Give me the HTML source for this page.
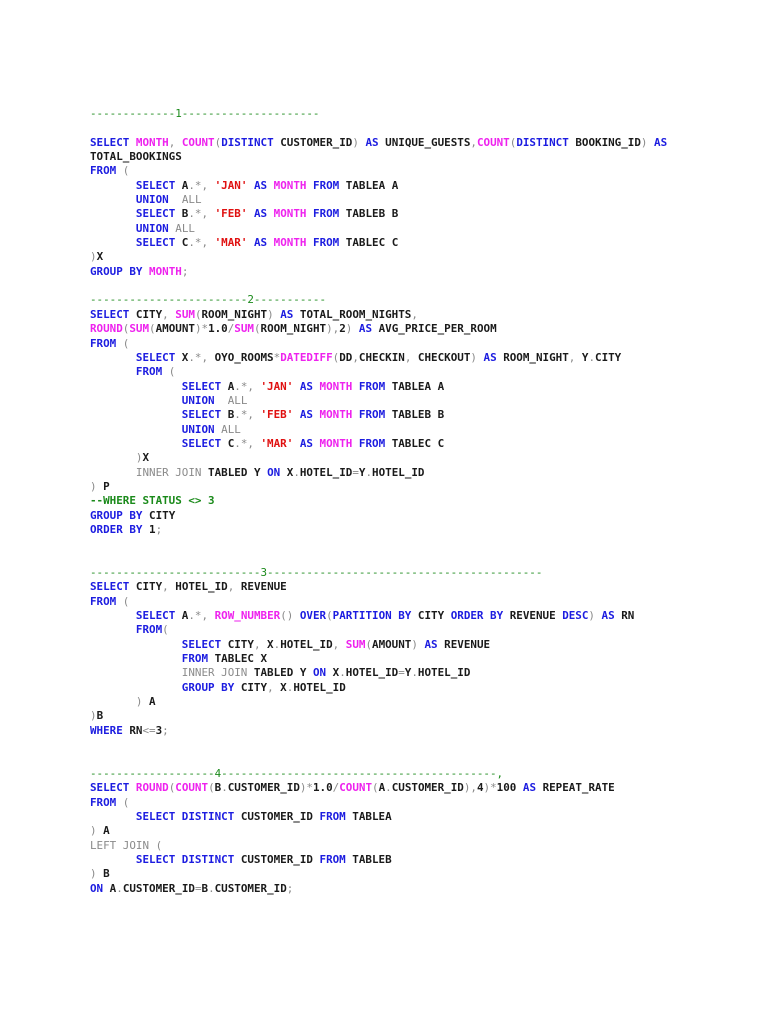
<!DOCTYPE html>
<html><head><meta charset="utf-8"><style>
html,body{margin:0;padding:0;background:#fff;width:768px;height:1024px;overflow:hidden}
pre{position:absolute;left:90px;top:107px;margin:0;font-family:"DejaVu Sans Mono","Liberation Mono",monospace;font-size:10.9px;line-height:14.35px;font-weight:bold;color:#1a1a1a;letter-spacing:0}
.k{color:#1c1ce0}.f{color:#ee22ee}.s{color:#e01010}.g{color:#8a8a8a;font-weight:normal}.c{color:#1a8a1a;font-weight:normal}.cb{color:#1a8a1a}
</style></head><body><pre><span class="c">-------------1---------------------</span>

<span class="k">SELECT</span> <span class="f">MONTH</span><span class="g">,</span> <span class="f">COUNT</span><span class="g">(</span><span class="k">DISTINCT</span> CUSTOMER_ID<span class="g">)</span> <span class="k">AS</span> UNIQUE_GUESTS<span class="g">,</span><span class="f">COUNT</span><span class="g">(</span><span class="k">DISTINCT</span> BOOKING_ID<span class="g">)</span> <span class="k">AS</span>
TOTAL_BOOKINGS
<span class="k">FROM</span> <span class="g">(</span>
       <span class="k">SELECT</span> A<span class="g">.*,</span> <span class="s">'JAN'</span> <span class="k">AS</span> <span class="f">MONTH</span> <span class="k">FROM</span> TABLEA A
       <span class="k">UNION</span>  <span class="g">ALL</span>
       <span class="k">SELECT</span> B<span class="g">.*,</span> <span class="s">'FEB'</span> <span class="k">AS</span> <span class="f">MONTH</span> <span class="k">FROM</span> TABLEB B
       <span class="k">UNION</span> <span class="g">ALL</span>
       <span class="k">SELECT</span> C<span class="g">.*,</span> <span class="s">'MAR'</span> <span class="k">AS</span> <span class="f">MONTH</span> <span class="k">FROM</span> TABLEC C
<span class="g">)</span>X
<span class="k">GROUP BY</span> <span class="f">MONTH</span><span class="g">;</span>

<span class="c">------------------------2-----------</span>
<span class="k">SELECT</span> CITY<span class="g">,</span> <span class="f">SUM</span><span class="g">(</span>ROOM_NIGHT<span class="g">)</span> <span class="k">AS</span> TOTAL_ROOM_NIGHTS<span class="g">,</span>
<span class="f">ROUND</span><span class="g">(</span><span class="f">SUM</span><span class="g">(</span>AMOUNT<span class="g">)*</span>1.0<span class="g">/</span><span class="f">SUM</span><span class="g">(</span>ROOM_NIGHT<span class="g">),</span>2<span class="g">)</span> <span class="k">AS</span> AVG_PRICE_PER_ROOM
<span class="k">FROM</span> <span class="g">(</span>
       <span class="k">SELECT</span> X<span class="g">.*,</span> OYO_ROOMS<span class="g">*</span><span class="f">DATEDIFF</span><span class="g">(</span>DD<span class="g">,</span>CHECKIN<span class="g">,</span> CHECKOUT<span class="g">)</span> <span class="k">AS</span> ROOM_NIGHT<span class="g">,</span> Y<span class="g">.</span>CITY
       <span class="k">FROM</span> <span class="g">(</span>
              <span class="k">SELECT</span> A<span class="g">.*,</span> <span class="s">'JAN'</span> <span class="k">AS</span> <span class="f">MONTH</span> <span class="k">FROM</span> TABLEA A
              <span class="k">UNION</span>  <span class="g">ALL</span>
              <span class="k">SELECT</span> B<span class="g">.*,</span> <span class="s">'FEB'</span> <span class="k">AS</span> <span class="f">MONTH</span> <span class="k">FROM</span> TABLEB B
              <span class="k">UNION</span> <span class="g">ALL</span>
              <span class="k">SELECT</span> C<span class="g">.*,</span> <span class="s">'MAR'</span> <span class="k">AS</span> <span class="f">MONTH</span> <span class="k">FROM</span> TABLEC C
       <span class="g">)</span>X
       <span class="g">INNER JOIN</span> TABLED Y <span class="k">ON</span> X<span class="g">.</span>HOTEL_ID<span class="g">=</span>Y<span class="g">.</span>HOTEL_ID
<span class="g">)</span> P
<span class="cb">--WHERE STATUS &lt;&gt; 3</span>
<span class="k">GROUP BY</span> CITY
<span class="k">ORDER BY</span> 1<span class="g">;</span>


<span class="c">--------------------------3------------------------------------------</span>
<span class="k">SELECT</span> CITY<span class="g">,</span> HOTEL_ID<span class="g">,</span> REVENUE
<span class="k">FROM</span> <span class="g">(</span>
       <span class="k">SELECT</span> A<span class="g">.*,</span> <span class="f">ROW_NUMBER</span><span class="g">()</span> <span class="k">OVER</span><span class="g">(</span><span class="k">PARTITION BY</span> CITY <span class="k">ORDER BY</span> REVENUE <span class="k">DESC</span><span class="g">)</span> <span class="k">AS</span> RN
       <span class="k">FROM</span><span class="g">(</span>
              <span class="k">SELECT</span> CITY<span class="g">,</span> X<span class="g">.</span>HOTEL_ID<span class="g">,</span> <span class="f">SUM</span><span class="g">(</span>AMOUNT<span class="g">)</span> <span class="k">AS</span> REVENUE
              <span class="k">FROM</span> TABLEC X
              <span class="g">INNER JOIN</span> TABLED Y <span class="k">ON</span> X<span class="g">.</span>HOTEL_ID<span class="g">=</span>Y<span class="g">.</span>HOTEL_ID
              <span class="k">GROUP BY</span> CITY<span class="g">,</span> X<span class="g">.</span>HOTEL_ID
       <span class="g">)</span> A
<span class="g">)</span>B
<span class="k">WHERE</span> RN<span class="g">&lt;=</span>3<span class="g">;</span>


<span class="c">-------------------4------------------------------------------,</span>
<span class="k">SELECT</span> <span class="f">ROUND</span><span class="g">(</span><span class="f">COUNT</span><span class="g">(</span>B<span class="g">.</span>CUSTOMER_ID<span class="g">)*</span>1.0<span class="g">/</span><span class="f">COUNT</span><span class="g">(</span>A<span class="g">.</span>CUSTOMER_ID<span class="g">),</span>4<span class="g">)*</span>100 <span class="k">AS</span> REPEAT_RATE
<span class="k">FROM</span> <span class="g">(</span>
       <span class="k">SELECT DISTINCT</span> CUSTOMER_ID <span class="k">FROM</span> TABLEA
<span class="g">)</span> A
<span class="g">LEFT JOIN (</span>
       <span class="k">SELECT DISTINCT</span> CUSTOMER_ID <span class="k">FROM</span> TABLEB
<span class="g">)</span> B
<span class="k">ON</span> A<span class="g">.</span>CUSTOMER_ID<span class="g">=</span>B<span class="g">.</span>CUSTOMER_ID<span class="g">;</span></pre></body></html>
